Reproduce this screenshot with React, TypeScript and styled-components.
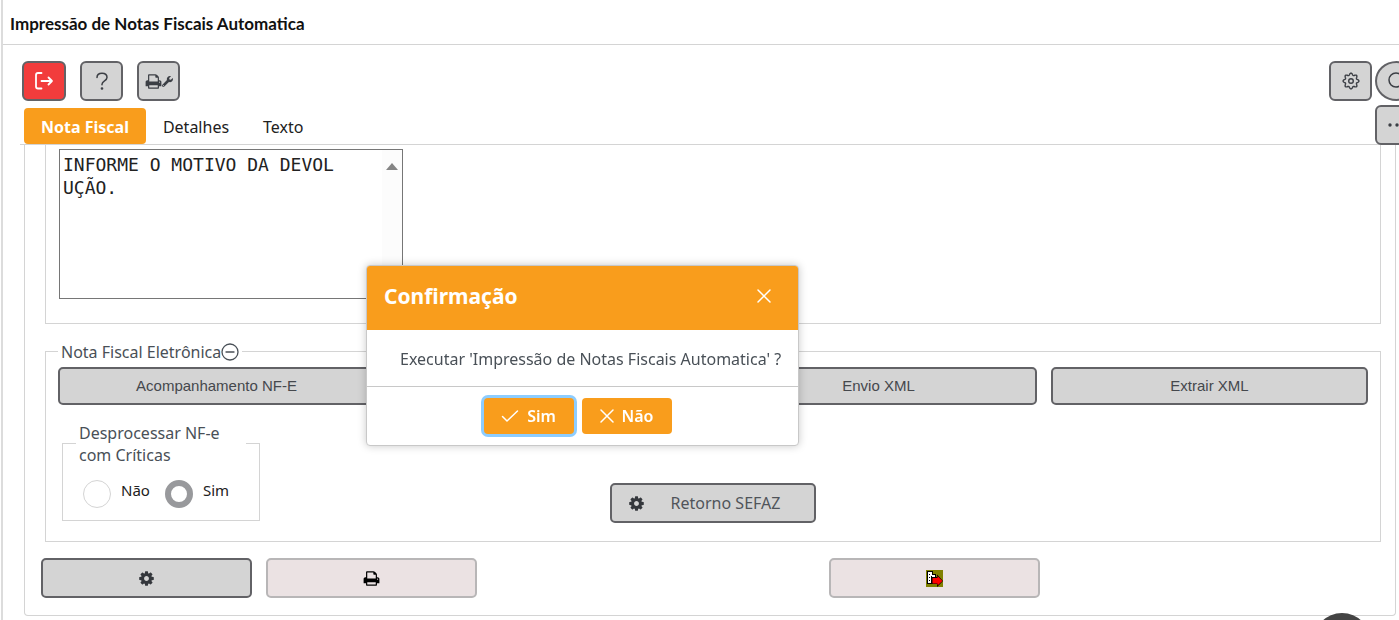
import React, { useState } from "react";
import styled, { createGlobalStyle, css } from "styled-components";
import { FaWrench } from "react-icons/fa";

const line = "#d4d4d4";
const orange = "#f99d1c";
const uiFont = '"Segoe UI", "Noto Sans", sans-serif';

const GlobalStyle = createGlobalStyle`
  *, *::before, *::after { box-sizing: border-box; }
  body {
    margin: 0;
    background: #fff;
    color: #212121;
    font: 16px/22px ${uiFont};
    overflow: hidden;
  }
  button, textarea, input { font: inherit; color: inherit; margin: 0; }
`;

const Page = styled.div`
  min-height: 100vh;
  margin-left: 1px;
  border-left: 2px solid #dcdcdc;
`;

const TitleBar = styled.header`
  height: 45px;
  padding: 3px 0 0 7px;
  border-bottom: 1px solid ${line};
  display: flex;
  align-items: center;
`;

const Title = styled.h1`
  margin: 0;
  font: 700 17px/22px Lato, sans-serif;
  color: #111;
`;

const Toolbar = styled.div`
  display: flex;
  gap: 14px;
  padding: 16px 0 0 19px;
  margin-right: -19px;
`;

const RightTools = styled.div`
  display: flex;
  gap: 3px;
  margin-left: auto;
`;

const ToolButton = styled.button<{ $danger?: boolean; $round?: boolean }>`
  width: ${(p) => (p.$danger ? 44 : 43)}px;
  height: 40px;
  padding: 0;
  display: flex;
  align-items: center;
  justify-content: center;
  flex: none;
  border: 2px solid #626266;
  border-radius: ${(p) => (p.$round ? "50%" : "6px")};
  background: ${(p) => (p.$danger ? "#f23c3c" : "#d4d4d4")};
  color: ${(p) => (p.$danger ? "#fff" : "#3c3f45")};
`;

const TabRow = styled.div`
  display: flex;
  align-items: flex-end;
  height: 44px;
  margin: 0 -19px 0 17px;
  padding-left: 4px;
  border-bottom: 1px solid ${line};
`;

const Tabs = styled.div`
  display: flex;
`;

const Tab = styled.button<{ $active?: boolean }>`
  height: 36px;
  padding: 2px 17px 0;
  border: 0;
  border-radius: 4px;
  background: none;
  ${(p) =>
    p.$active &&
    css`
      background: ${orange};
      color: #fff;
      font-weight: 700;
    `}
`;

const MoreSlot = styled.div`
  margin-left: auto;
  margin-bottom: -1px;
`;

const Panel = styled.main`
  margin: 0 3px 0 21px;
  padding: 0 14px 17px;
  border: 1px solid ${line};
  border-top: 0;
  border-radius: 0 0 4px 4px;
`;

const MessageBox = styled.section`
  margin-left: 6px;
  padding: 4px 13px 24px;
  border: 1px solid ${line};
  border-top: 0;
`;

const MessageField = styled.div`
  display: flex;
  width: 344px;
  height: 150px;
  border: 1px solid #767676;
`;

const MessageInput = styled.textarea`
  flex: 1;
  padding: 3px;
  border: 0;
  outline: 0;
  resize: none;
  overflow: hidden;
  background: none;
  color: #222;
  font: 18px/23px "DejaVu Sans Mono", monospace;
`;

const ScrollTrack = styled.div`
  width: 20px;
  padding-top: 13px;
  background: #fcfcfc;
  text-align: center;
  line-height: 0;
`;

const Group = styled.fieldset`
  min-width: 0;
  margin: 15px 0 0 6px;
  padding: 4px 12px 18px;
  border: 1px solid ${line};
`;

const GroupTitle = styled.legend`
  display: flex;
  align-items: center;
  padding: 2px 3px 0;
  color: #495057;
`;

const Grid = styled.div`
  display: grid;
  grid-template-columns: repeat(12, 1fr);
  column-gap: 14px;
`;

const ActionButton = styled.button<{ $start: number; $span: number; $soft?: boolean }>`
  grid-column: ${(p) => p.$start} / span ${(p) => p.$span};
  height: 40px;
  padding: 0;
  display: flex;
  align-items: center;
  justify-content: center;
  border: 2px solid ${(p) => (p.$soft ? "#b8b6b7" : "#626266")};
  border-radius: 5px;
  background: ${(p) => (p.$soft ? "#ebe2e3" : "#d4d4d4")};
  color: ${(p) => (p.$soft ? "#000" : "#34373c")};
`;

const XmlButton = styled(ActionButton)`
  height: 38px;
  color: #45484d;
  font: 15px/20px Arial, "Liberation Sans", sans-serif;
`;

const ReturnButton = styled(ActionButton)`
  align-self: end;
  gap: 26px;
  padding-right: 18px;
  color: #50545a;
  svg { color: #34373c; }
`;

const Lower = styled(Grid)`
  margin-top: 16px;
  align-items: start;
`;

const RadioGroup = styled.fieldset`
  grid-column: span 2;
  min-width: 0;
  margin: 0 5px 2px 4px;
  padding: 13px 20px 12px;
  border: 1px solid ${line};
`;

const RadioLegend = styled.legend`
  width: 170px;
  margin-left: -7px;
  padding: 1px 3px 0;
  color: #495057;
`;

const Radios = styled.div`
  display: flex;
  gap: 15px;
  font-size: 15px;
`;

const RadioLabel = styled.label`
  display: flex;
  gap: 10px;
`;

const Radio = styled.input`
  appearance: none;
  width: 28px;
  height: 28px;
  margin: 1px 0 0;
  border: 1px solid ${line};
  border-radius: 50%;
  background: #fff;
  &:checked { border: 6px solid #98999c; }
`;

const Footer = styled(Grid)`
  margin: 16px 3px 0 2px;
`;

const Dialog = styled.div`
  position: fixed;
  left: 366px;
  top: 265px;
  width: 433px;
  border: 1px solid #c8c8c8;
  border-radius: 4px;
  background: #fff;
  box-shadow: 0 0 8px rgba(0, 0, 0, 0.22);
  overflow: hidden;
`;

const DialogHead = styled.div`
  display: flex;
  align-items: center;
  justify-content: space-between;
  height: 64px;
  padding: 0 27px 4px 17px;
  background: ${orange};
  color: #fff;
`;

const DialogTitle = styled.h2`
  margin: 0;
  font-size: 21px;
  line-height: 30px;
`;

const CloseButton = styled.button`
  padding: 0;
  border: 0;
  background: none;
  line-height: 0;
`;

const DialogText = styled.p`
  margin: 0;
  padding: 18px 0 16px 33px;
  white-space: nowrap;
  color: #495057;
`;

const DialogFoot = styled.div`
  display: flex;
  justify-content: center;
  gap: 8px;
  padding: 11px 18px 11px 8px;
  border-top: 1px solid #c8c8c8;
`;

const DialogButton = styled.button<{ $focused?: boolean }>`
  display: flex;
  align-items: center;
  justify-content: center;
  gap: 8px;
  width: 90px;
  height: 36px;
  padding: 0;
  border: 0;
  border-radius: 4px;
  background: ${orange};
  color: #fff;
  font-weight: 600;
  box-shadow: ${(p) => (p.$focused ? "0 0 0 3px #8dcdff" : "none")};
`;

const HelpBubble = styled.button`
  position: fixed;
  right: 28px;
  bottom: -51px;
  width: 58px;
  height: 58px;
  border: 0;
  border-radius: 50%;
  background: #444;
`;

const stroke = { fill: "none", stroke: "currentColor", strokeLinecap: "round", strokeLinejoin: "round" } as const;

const ExitIcon = () => (
  <svg width="20" height="20" viewBox="0 0 20 20" {...stroke} strokeWidth="1.8">
    <path d="M7.500 2H4Q2 2 2 4V15.500Q2 17.500 4 17.500H7.500M7.500 10H18M14.500 6.500L18 10L14.500 13.500" />
  </svg>
);

const QuestionIcon = () => (
  <svg width="14" height="18" viewBox="0 0 14 18" {...stroke} strokeWidth="1.500">
    <path d="M2 5.500C2 3 4 1.200 7 1.200S12 3 12 5.500C12 9 7 8.600 7 12.200V12.800" />
    <circle cx="7" cy="16.500" r=".6" fill="currentColor" />
  </svg>
);

const scallop =
  Array.from({ length: 96 }, (_, i) => {
    const a = (i / 96) * Math.PI * 2;
    const r = 6.9 + 1 * Math.cos(8 * a);
    return `${i ? "L" : "M"}${(9 + r * Math.cos(a)).toFixed(2)} ${(9 + r * Math.sin(a)).toFixed(2)}`;
  }).join("") + "Z";

const SettingsIcon = () => (
  <svg width="18" height="18" viewBox="0 0 18 18" {...stroke} strokeWidth="1.400">
    <path d={scallop} />
    <circle cx="9" cy="9" r="2.300" />
  </svg>
);

const CogIcon = () => (
  <svg width="17" height="17" viewBox="0 0 1792 1792" fill="currentColor">
    <path d="M1152 896q0-106-75-181t-181-75-181 75-75 181 75 181 181 75 181-75 75-181zm512-109v222q0 12-8 23t-20 13l-185 28q-19 54-39 91 35 50 107 138 10 12 10 25t-9 23q-27 37-99 108t-94 71q-12 0-26-9l-138-108q-44 23-91 38-16 136-29 186-7 28-36 28h-222q-14 0-24.500-8.500t-11.500-21.500l-28-184q-49-16-90-37l-141 107q-10 9-25 9-14 0-25-11-126-114-165-168-7-10-7-23 0-12 8-23 15-21 51-66.500t54-70.500q-27-50-41-99l-183-27q-13-2-21-12.500t-8-23.500v-222q0-12 8-23t19-13l186-28q14-46 39-92-40-57-107-138-10-12-10-24 0-10 9-23 26-36 98.500-107.500t94.500-71.500q13 0 26 10l138 107q44-23 91-38 16-136 29-186 7-28 36-28h222q14 0 24.500 8.500t11.500 21.500l28 184q49 16 90 37l142-107q9-9 24-9 13 0 25 10 129 119 165 170 7 8 7 22 0 12-8 23-15 21-51 66.500t-54 70.500q26 50 41 98l183 28q13 2 21 12.500t8 23.500z" />
  </svg>
);

const PrinterIcon = () => (
  <svg width="17" height="17" viewBox="0 0 1792 1792" fill="currentColor">
    <path d="M448 1536h896v-256h-896v256zm0-640h896v-384h-160q-40 0-68-28t-28-68v-160h-640v640zm1152 64q0-26-19-45t-45-19-45 19-19 45 19 45 45 19 45-19 19-45zm128 0v416q0 13-9.500 22.500t-22.500 9.500h-224v160q0 40-28 68t-68 28h-960q-40 0-68-28t-28-68v-160h-224q-13 0-22.500-9.500t-9.500-22.500v-416q0-79 56.500-135.500t135.500-56.500h64v-544q0-40 28-68t68-28h672q40 0 88 20t76 48l152 152q28 28 48 76t20 88v256h64q79 0 135.500 56.500t56.500 135.500z" />
  </svg>
);

const CrossIcon = () => (
  <svg width="14" height="14" viewBox="0 0 14 14" {...stroke} stroke="#fff" strokeWidth="1.500">
    <path d="M1 1L13 13M13 1L1 13" />
  </svg>
);

const CheckIcon = () => (
  <svg width="18" height="14" viewBox="0 0 18 14" {...stroke} stroke="#fff" strokeWidth="1.500">
    <path d="M1.500 7.500L6 12L16.500 2" />
  </svg>
);

const ExportIcon = () => (
  <svg width="17" height="17" viewBox="0 0 17 17">
    <path fill="#808000" d="M0 0h17v17H0z" />
    <path fill="#000" d="M1 1h6v3h3v4H6v6H1z" />
    <path fill="#fff" d="M2 2h4v3h3v2H5v6H2z" />
    <path fill="#000" d="M3 4h1v1H3zM3 7h1v1H3zM3 10h1v1H3zM5 6h1v1H5z" />
    <path fill="#000" d="M6 7h5V4.500L17 11l-6 6v-3H6z" />
    <path fill="#f00" d="M6.500 8h5V6L16.500 11l-5 4.500V13.500h-5z" />
  </svg>
);

export default function App() {
  const [text, setText] = useState("INFORME O MOTIVO DA DEVOL\nUÇÃO.");
  const [choice, setChoice] = useState("Sim");

  return (
    <>
      <GlobalStyle />
      <Page>
        <TitleBar>
          <Title>Impressão de Notas Fiscais Automatica</Title>
        </TitleBar>

        <Toolbar>
          <ToolButton $danger aria-label="Sair"><ExitIcon /></ToolButton>
          <ToolButton aria-label="Ajuda"><QuestionIcon /></ToolButton>
          <ToolButton aria-label="Configurar impressora">
            <PrinterIcon />
            <FaWrench size={11} />
          </ToolButton>
          <RightTools>
            <ToolButton aria-label="Configurações"><SettingsIcon /></ToolButton>
            <ToolButton $round aria-label="Pesquisar">
              <svg width="18" height="18" viewBox="0 0 18 18" {...stroke} strokeWidth="1.500">
                <circle cx="8" cy="8" r="7" />
                <path d="M13 13l4 4" />
              </svg>
            </ToolButton>
          </RightTools>
        </Toolbar>

        <TabRow>
          <Tabs role="tablist">
            <Tab role="tab" aria-selected $active>Nota Fiscal</Tab>
            <Tab role="tab">Detalhes</Tab>
            <Tab role="tab">Texto</Tab>
          </Tabs>
          <MoreSlot>
            <ToolButton aria-label="Mais opções">
              <svg width="18" height="4" viewBox="0 0 18 4" fill="currentColor">
                <circle cx="2" cy="2" r="1.700" />
                <circle cx="9" cy="2" r="1.700" />
                <circle cx="16" cy="2" r="1.700" />
              </svg>
            </ToolButton>
          </MoreSlot>
        </TabRow>

        <Panel>
          <MessageBox>
            <MessageField>
              <MessageInput aria-label="Motivo" value={text} onChange={(e) => setText(e.target.value)} />
              <ScrollTrack>
                <svg width="12" height="7" viewBox="0 0 12 7"><path d="M0 7L6 0L12 7z" fill="#858585" /></svg>
              </ScrollTrack>
            </MessageField>
          </MessageBox>

          <Group>
            <GroupTitle>
              Nota Fiscal Eletrônica
              <svg width="18" height="18" viewBox="0 0 18 18" {...stroke} strokeWidth="1.300">
                <circle cx="9" cy="9" r="8" />
                <path d="M5 9h8" />
              </svg>
            </GroupTitle>
            <Grid>
              <XmlButton $start={1} $span={3}>Acompanhamento NF-E</XmlButton>
              <XmlButton $start={7} $span={3}>Envio XML</XmlButton>
              <XmlButton $start={10} $span={3}>Extrair XML</XmlButton>
            </Grid>
            <Lower>
              <RadioGroup>
                <RadioLegend>Desprocessar NF-e com Críticas</RadioLegend>
                <Radios>
                  {["Não", "Sim"].map((option) => (
                    <RadioLabel key={option}>
                      <Radio
                        type="radio"
                        name="desprocessar"
                        checked={choice === option}
                        onChange={() => setChoice(option)}
                      />
                      {option}
                    </RadioLabel>
                  ))}
                </Radios>
              </RadioGroup>
              <ReturnButton $start={6} $span={2}>
                <CogIcon />
                Retorno SEFAZ
              </ReturnButton>
            </Lower>
          </Group>

          <Footer>
            <ActionButton $start={1} $span={2} aria-label="Processar"><CogIcon /></ActionButton>
            <ActionButton $start={3} $span={2} $soft aria-label="Imprimir"><PrinterIcon /></ActionButton>
            <ActionButton $start={8} $span={2} $soft aria-label="Exportar"><ExportIcon /></ActionButton>
          </Footer>
        </Panel>
      </Page>

      <HelpBubble aria-label="Assistente" />

      <Dialog role="dialog" aria-labelledby="confirm-title">
        <DialogHead>
          <DialogTitle id="confirm-title">Confirmação</DialogTitle>
          <CloseButton aria-label="Fechar"><CrossIcon /></CloseButton>
        </DialogHead>
        <DialogText>Executar 'Impressão de Notas Fiscais Automatica' ?</DialogText>
        <DialogFoot>
          <DialogButton $focused><CheckIcon />Sim</DialogButton>
          <DialogButton><CrossIcon />Não</DialogButton>
        </DialogFoot>
      </Dialog>
    </>
  );
}
